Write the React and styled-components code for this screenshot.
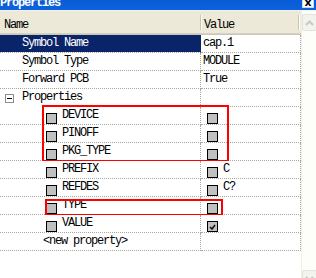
import React from 'react';
import styled, { createGlobalStyle } from 'styled-components';

const GlobalStyle = createGlobalStyle`
  html, body {
    margin: 0;
    padding: 0;
    background: #fff;
    overflow: hidden;
  }
  body {
    font-family: "Liberation Mono", "Courier New", monospace;
  }
`;

const LINE = '#a9a79c';

const Window = styled.div`
  width: 316px;
  height: 287px;
  display: flex;
  flex-direction: column;
  background: #fff;
`;

const TitleBar = styled.div`
  flex: none;
  height: 10px;
  display: flex;
  justify-content: space-between;
  align-items: flex-start;
  overflow: hidden;
  background: linear-gradient(#0a5bd5, #0b62df);
  border-bottom: 1px solid #f4f2ea;
`;

const TitleText = styled.span`
  margin-top: -3px;
  color: #fff;
  font-size: 12px;
  line-height: 12px;
  font-weight: bold;
  letter-spacing: -1.2px;
`;

const CloseButton = styled.span`
  width: 12px;
  height: 12px;
  margin: -4px 2px 0 0;
  box-sizing: border-box;
  display: flex;
  align-items: flex-end;
  justify-content: center;
  background: #fff;
  border: 1px solid #c9d6ef;
  color: #000;
  font: bold 11px/9px "DejaVu Sans", sans-serif;
`;

const Body = styled.div`
  flex: 1;
  display: flex;
  min-height: 0;
`;

const Grid = styled.div`
  width: 301px;
  flex: none;
  display: flex;
  flex-direction: column;
`;

const Header = styled.div`
  height: 24px;
  box-sizing: border-box;
  display: flex;
  align-items: flex-start;
  background: #ece9d8;
  border-bottom: 1px solid #cbc7b8;
  box-shadow: inset 0 -1px 0 #d6d2c2;
`;

const HeadCell = styled.div`
  width: ${p => p.$width}px;
  box-sizing: border-box;
  padding: 8px 0 0 ${p => p.$pad}px;
  font-size: 12px;
  line-height: 12px;
  letter-spacing: -1.2px;
  color: #000;
`;

const HeadDivider = styled.div`
  width: 1px;
  height: 15px;
  margin-top: 4px;
  background: #c7c5b2;
  box-shadow: 1px 0 0 #fff;
`;

const Row = styled.div`
  position: relative;
  display: grid;
  grid-template-columns: 201px 100px;
  height: 18px;
`;

const RowGroup = styled.div`
  position: relative;
`;

const Cell = styled.div`
  display: flex;
  align-items: flex-start;
  box-sizing: border-box;
  padding-left: ${p => p.$indent || 0}px;
  gap: ${p => p.$gap || 0}px;
  background: ${p => (p.$selected ? '#0a246a' : '#fff')};
  background-clip: padding-box;
  color: ${p => (p.$selected ? '#fff' : '#000')};
  border-bottom: 1px dotted ${p => (p.$noLine ? 'transparent' : LINE)};
  border-right: 1px ${p => (p.$selected ? 'solid #0a246a' : `dotted ${LINE}`)};
  white-space: nowrap;
  overflow: hidden;
`;

const Label = styled.span`
  font-size: 12px;
  line-height: 17px;
  letter-spacing: -1.2px;
`;

const Check = styled.span`
  flex: none;
  width: 11px;
  height: 11px;
  margin-top: 6px;
  box-sizing: border-box;
  display: flex;
  align-items: center;
  justify-content: center;
  background: #c0c0c0;
  border: 1px solid #000;
`;

const Toggle = styled.span`
  flex: none;
  width: 9px;
  height: 9px;
  margin-top: 5px;
  box-sizing: border-box;
  display: flex;
  align-items: center;
  justify-content: center;
  background: #fff;
  border: 1px solid #8c8c8c;

  &::before {
    content: '';
    width: 5px;
    height: 1px;
    background: #000;
  }
`;

const Marker = styled.div`
  position: absolute;
  top: ${p => p.$top}px;
  left: ${p => p.$left}px;
  width: ${p => p.$width}px;
  height: ${p => p.$height}px;
  box-sizing: border-box;
  border: 2px solid #ff0000;
  pointer-events: none;
`;

const ScrollBar = styled.div`
  width: 15px;
  flex: none;
  display: flex;
  flex-direction: column;
  justify-content: space-between;
  background: #fdfdfa;
  border-left: 1px solid #f0efe8;
`;

const ScrollButton = styled.div`
  height: 17px;
  margin-top: ${p => (p.$top ? 3 : 0)}px;
  box-sizing: border-box;
  display: flex;
  align-items: center;
  justify-content: center;
  background: #f3f3ee;
  border: 1px solid #e4e3da;
  border-radius: 2px;
`;

const Chevron = ({ up }) => (
  <svg width="9" height="6" viewBox="0 0 9 6">
    <path
      d={up ? 'M1 5 L4.5 1.5 L8 5' : 'M1 1 L4.5 4.5 L8 1'}
      fill="none"
      stroke="#c9c9c1"
      strokeWidth="2"
    />
  </svg>
);

const Tick = () => (
  <svg width="7" height="6" viewBox="0 0 7 6">
    <path d="M1 3 L3 5 L6 1" fill="none" stroke="#111" strokeWidth="1.6" />
  </svg>
);

const topRows = [
  { name: 'Symbol Name', value: 'cap.1', selected: true },
  { name: 'Symbol Type', value: 'MODULE' },
  { name: 'Forward PCB', value: 'True' },
];

const flagged = ['DEVICE', 'PINOFF', 'PKG_TYPE'];

const PropRow = ({ name, value, checked, children }) => (
  <Row>
    <Cell $indent={46} $gap={5}>
      <Check />
      <Label>{name}</Label>
    </Cell>
    <Cell $indent={6} $gap={5}>
      <Check>{checked && <Tick />}</Check>
      {value && <Label>{value}</Label>}
    </Cell>
    {children}
  </Row>
);

export default function App() {
  return (
    <>
      <GlobalStyle />
      <Window>
        <TitleBar>
          <TitleText>Properties</TitleText>
          <CloseButton>x</CloseButton>
        </TitleBar>
        <Body>
          <Grid>
            <Header>
              <HeadCell $width={200} $pad={4}>Name</HeadCell>
              <HeadDivider />
              <HeadCell $width={97} $pad={3}>Value</HeadCell>
              <HeadDivider />
            </Header>

            {topRows.map(r => (
              <Row key={r.name}>
                <Cell $indent={22} $selected={r.selected}>
                  <Label>{r.name}</Label>
                </Cell>
                <Cell $indent={2}>
                  <Label>{r.value}</Label>
                </Cell>
              </Row>
            ))}

            <Row>
              <Cell $indent={5} $gap={8} $noLine>
                <Toggle />
                <Label>Properties</Label>
              </Cell>
              <Cell />
            </Row>

            <RowGroup>
              {flagged.map(n => (
                <PropRow key={n} name={n} />
              ))}
              <Marker $top={-2} $left={42} $width={187} $height={57} />
            </RowGroup>

            <PropRow name="PREFIX" value="C" />
            <PropRow name="REFDES" value="C?" />
            <PropRow name="TYPE">
              <Marker $top={2} $left={45} $width={178} $height={17} />
            </PropRow>
            <PropRow name="VALUE" checked />

            <Row>
              <Cell $indent={43}>
                <Label>&lt;new property&gt;</Label>
              </Cell>
              <Cell />
            </Row>
          </Grid>
          <ScrollBar>
            <ScrollButton $top>
              <Chevron up />
            </ScrollButton>
            <ScrollButton>
              <Chevron />
            </ScrollButton>
          </ScrollBar>
        </Body>
      </Window>
    </>
  );
}
